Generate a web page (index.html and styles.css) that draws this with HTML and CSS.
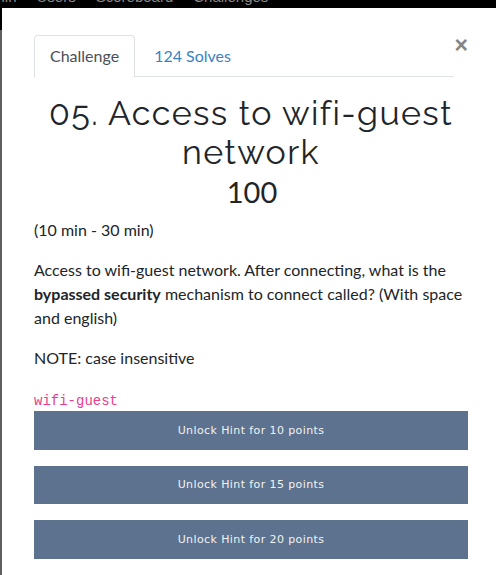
FILE: index.html
```html
<!DOCTYPE html>
<html>
<head>
<meta charset="utf-8">
<link rel="stylesheet" href="styles.css">
</head>
<body>
<nav class="topbar">
  <span>Admin</span><span>Users</span><span>Scoreboard</span><span>Challenges</span>
</nav>
<div class="backdrop"></div>
<div class="modal">
  <div class="head">
    <ul class="tabs">
      <li class="tab active">Challenge</li>
      <li class="tab link">124 Solves</li>
    </ul>
    <span class="close">&times;</span>
  </div>
  <h2 class="title">05. Access to wifi-guest network</h2>
  <h3 class="value">100</h3>
  <p class="time">(10 min - 30 min)</p>
  <p class="desc">Access to wifi-guest network. After connecting, what is the <b>bypassed security</b> mechanism to connect called? (With space and english)</p>
  <p class="note">NOTE: case insensitive</p>
  <code class="tag">wifi-guest</code>
  <div class="hints">
    <button class="hint">Unlock Hint for 10 points</button>
    <button class="hint">Unlock Hint for 15 points</button>
    <button class="hint">Unlock Hint for 20 points</button>
  </div>
</div>
</body>
</html>
```
FILE: styles.css
```css
html, body {
  margin: 0;
  padding: 0;
  height: 100%;
  overflow: hidden;
}
body {
  background: #5f5f5f;
  font-family: Lato, "Open Sans", sans-serif;
  color: #212529;
  position: relative;
}
.topbar {
  height: 30px;
  background: #000;
  display: flex;
  gap: 20px;
  margin-left: -26px;
  font-family: "Liberation Sans", sans-serif;
  font-size: 15px;
  color: #8a8a8a;
  line-height: 15px;
}
.topbar span {
  margin-top: -11px;
}
.modal {
  position: absolute;
  top: 8px;
  left: 2px;
  right: 0;
  bottom: 0;
  background: #fff;
  padding: 27px 28px 0 32px;
}
.head {
  display: flex;
  align-items: flex-start;
}
.tabs {
  list-style: none;
  margin: 0;
  padding: 0;
  display: flex;
  width: 420px;
  border-bottom: 1px solid #dee2e6;
  height: 41px;
}
.tab {
  font-size: 16px;
  padding: 10px 15px 0;
  height: 31px;
  border: 1px solid transparent;
  border-radius: 4px 4px 0 0;
  margin-bottom: -1px;
}
.tab.active {
  color: #495057;
  border-color: #dee2e6 #dee2e6 #fff;
  background: #fff;
}
.tab.link {
  color: #3a82c4;
  padding-left: 18px;
}
.close {
  margin-left: auto;
  margin-top: -2px;
  font-family: "Liberation Sans", sans-serif;
  font-weight: bold;
  font-size: 23px;
  color: #858585;
  line-height: 24px;
}
.title {
  margin: 17px 0 0;
  text-align: center;
  font-family: Raleway, "Open Sans", sans-serif;
  font-weight: 400;
  font-size: 34px;
  line-height: 39px;
  letter-spacing: 1.4px;
  padding: 0;
}
.value {
  margin: 3px 0 0;
  text-align: center;
  font-weight: 400;
  font-size: 29px;
  line-height: 34px;
  padding-left: 2px;
}
.time, .desc, .note {
  font-size: 16px;
  line-height: 24px;
  margin: 0;
}
.time {
  margin-top: 9px;
}
.desc {
  margin-top: 16px;
}
.note {
  margin-top: 16px;
}
.tag {
  display: block;
  margin-top: 23px;
  font-family: "Liberation Mono", monospace;
  font-size: 14px;
  line-height: 17px;
  color: #e83e8c;
}
.hints {
  display: flex;
  flex-direction: column;
  gap: 16px;
  margin-top: 1px;
}
.hint {
  display: block;
  width: 434px;
  height: 38.5px;
  border: 0;
  border-radius: 0;
  background: #5c728f;
  color: #f2f2f2;
  font-family: "DejaVu Sans", sans-serif;
  font-size: 11px;
  letter-spacing: 0.4px;
  padding: 0;
}
```
